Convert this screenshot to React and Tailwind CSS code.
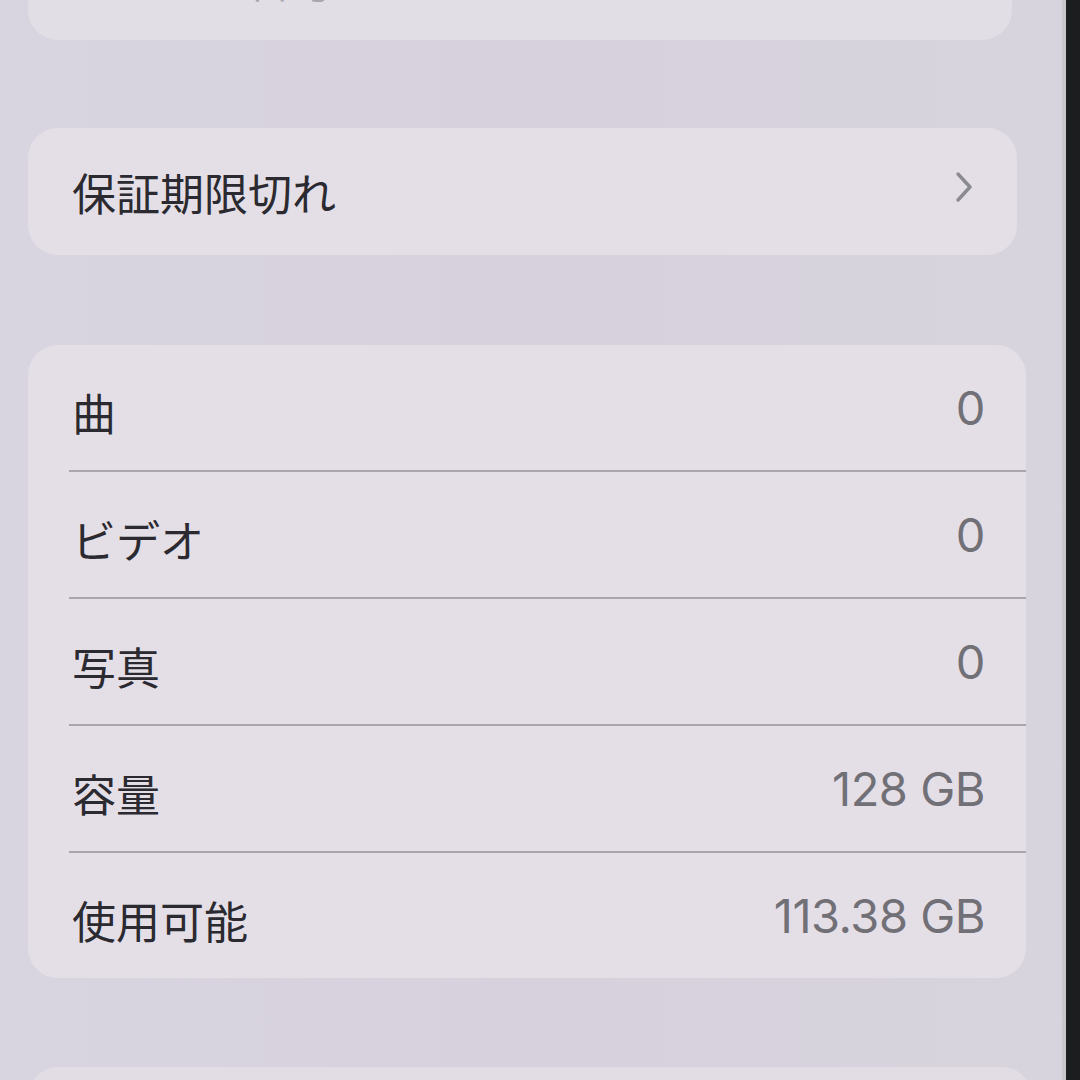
import React from "react";

const font = { fontFamily: "Inter, 'Noto Sans CJK JP', sans-serif" };

const rows = [
  { label: "曲", value: "0" },
  { label: "ビデオ", value: "0" },
  { label: "写真", value: "0" },
  { label: "容量", value: "128 GB" },
  { label: "使用可能", value: "113.38 GB" },
];

const Chevron = () => (
  <svg width="22" height="32" viewBox="0 0 22 32" fill="none">
    <polyline
      points="5,3 17,16 5,29"
      stroke="#8c8a91"
      strokeWidth="3.4"
      strokeLinecap="round"
      strokeLinejoin="round"
    />
  </svg>
);

const App = () => {
  return (
    <div
      className="w-[1080px] h-[1080px] overflow-hidden flex bg-[#1b1d1e]"
      style={font}
    >
      {/* screen */}
      <div className="flex-1 flex flex-col bg-gradient-to-r from-[#d9d5e0] via-[#d6d1dc] to-[#d8d4de] pl-[28px]">
        {/* previous group, mostly scrolled off */}
        <div className="shrink-0 mt-[-90px] h-[130px] mr-[50px] rounded-[30px] bg-[#e2dee6] flex items-end px-[44px] pb-[36px]">
          <span className="text-[44px] leading-[48px] text-[#2d2c31] opacity-30 translate-y-[2px]">
            シリアル番号
          </span>
        </div>

        {/* warranty */}
        <div className="shrink-0 mt-[88px] h-[127px] mr-[45px] rounded-[30px] bg-[#e4dfe7] flex items-center justify-between pl-[44px] pr-[42px]">
          <span className="text-[44px] leading-none text-[#2b2a30] pt-[6px]">
            保証期限切れ
          </span>
          <span className="-mt-[10px]">
            <Chevron />
          </span>
        </div>

        {/* media / storage */}
        <div className="shrink-0 mt-[90px] mr-[36px] rounded-[30px] bg-[#e4dfe7] flex flex-col overflow-hidden">
          {rows.map((r, i) => (
            <div key={r.label} className="flex flex-col">
              {i > 0 && <div className="ml-[41px] h-[2px] bg-[#a8a5ad]" />}
              <div className="h-[125px] flex items-center justify-between pl-[44px] pr-[41px]">
                <span className="text-[44px] leading-none text-[#2b2a30] pt-[14px]">
                  {r.label}
                </span>
                <span className="text-[47px] leading-none text-[#727077] tracking-[-0.5px]">
                  {r.value}
                </span>
              </div>
            </div>
          ))}
        </div>

        {/* next group */}
        <div className="shrink-0 mt-[89px] h-[120px] mr-[30px] rounded-[30px] bg-[#e2dde5]" />
      </div>

      {/* phone edge */}
      <div className="w-[4px] bg-[#c9c6cc]" />
      <div className="w-[14px] bg-[#1b1d1e]" />
    </div>
  );
};

export default App;
